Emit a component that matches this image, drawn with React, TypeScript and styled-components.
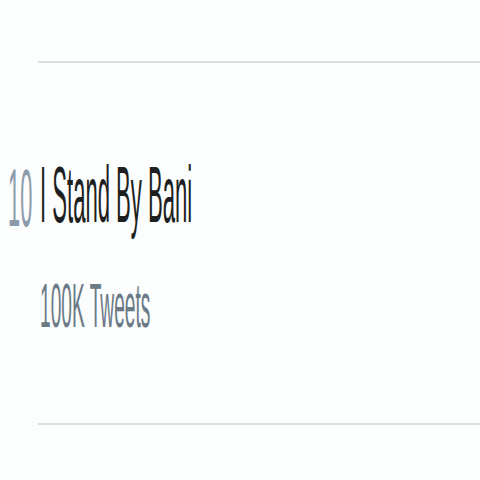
import React from "react";
import styled, { createGlobalStyle } from "styled-components";

const Global = createGlobalStyle`
  html, body {
    margin: 0;
    padding: 0;
    background: #fcfdfd;
    overflow: hidden;
  }
  body {
    font-family: "Liberation Sans", Arial, sans-serif;
  }
`;

const Page = styled.div`
  width: 480px;
  height: 480px;
  padding-top: 61px;
  box-sizing: border-box;
  overflow: hidden;
`;

const Item = styled.div`
  display: flex;
  align-items: flex-start;
`;

const Rank = styled.div`
  width: 30px;
  padding-left: 8px;
  margin-top: 97px;
  flex: none;
`;

const Content = styled.div`
  flex: 1;
  border-top: 2px solid #dcdfe1;
  border-bottom: 2px solid #dcdfe1;
  padding: 92px 0 86px 2px;
  display: flex;
  flex-direction: column;
  gap: 39px;
`;

const Condensed = styled.div<{ $size: number; $scale: number; $color: string }>`
  font-size: ${(p) => p.$size}px;
  line-height: ${(p) => p.$size}px;
  color: ${(p) => p.$color};
  white-space: nowrap;
  transform: scaleX(${(p) => p.$scale});
  transform-origin: left top;
  width: 0;
`;

export default function App() {
  return (
    <>
      <Global />
      <Page>
        <Item>
          <Rank>
            <Condensed $size={81} $scale={0.27} $color="#8b9bab">
              10
            </Condensed>
          </Rank>
          <Content>
            <Condensed $size={80} $scale={0.276} $color="#1d1f21">
              I Stand By Bani
            </Condensed>
            <Condensed $size={63} $scale={0.304} $color="#6a7a87">
              100K Tweets
            </Condensed>
          </Content>
        </Item>
      </Page>
    </>
  );
}
